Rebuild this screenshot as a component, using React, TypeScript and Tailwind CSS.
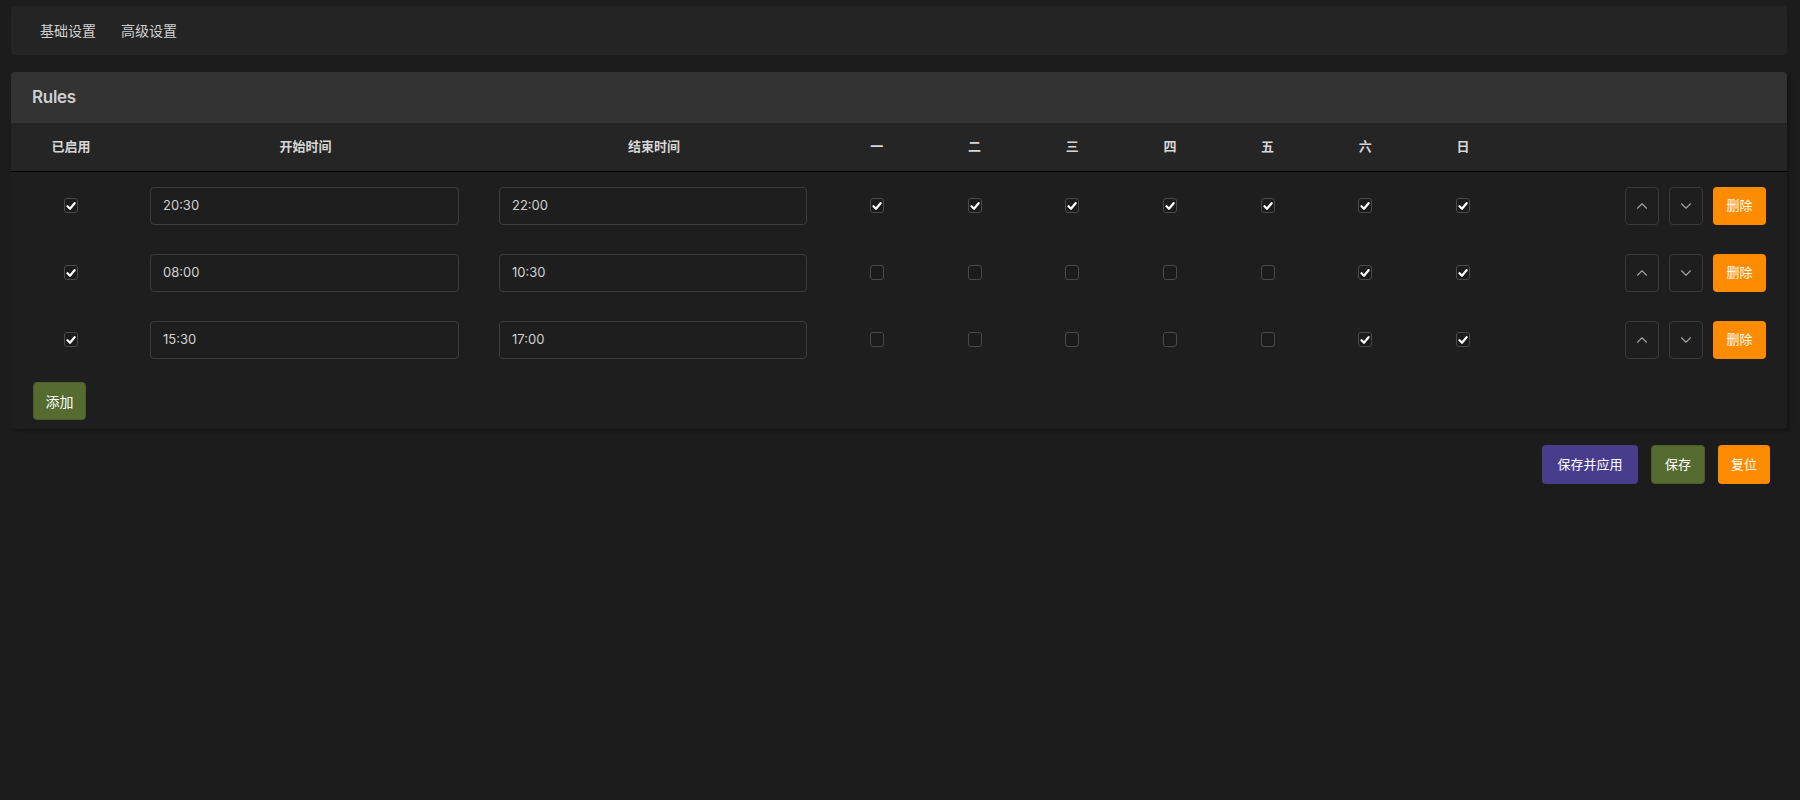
import { ChevronUp, ChevronDown } from 'lucide-react';

interface Rule {
  enabled: boolean;
  start: string;
  end: string;
  days: boolean[];
}

const RULES: Rule[] = [
  { enabled: true, start: '20:30', end: '22:00', days: [true, true, true, true, true, true, true] },
  { enabled: true, start: '08:00', end: '10:30', days: [false, false, false, false, false, true, true] },
  { enabled: true, start: '15:30', end: '17:00', days: [false, false, false, false, false, true, true] },
];

const DAYS = ['一', '二', '三', '四', '五', '六', '日'];

const GRID = 'grid grid-cols-[120px_349px_348px_repeat(7,97.7px)_1fr] items-center';

function Check({ checked }: { checked: boolean }) {
  return (
    <span className="w-[14px] h-[15px] rounded-[3px] border border-[#4a4a4a] bg-[#1b1b1b] flex items-center justify-center">
      {checked && (
        <svg width="10" height="10" viewBox="0 0 10 10">
          <path d="M1.5 5.2 L4 7.8 L8.6 2.2" fill="none" stroke="#fff" strokeWidth="2.2" strokeLinecap="round" strokeLinejoin="round" />
        </svg>
      )}
    </span>
  );
}

function TimeInput({ value }: { value: string }) {
  return (
    <div className="h-[38px] rounded-[4px] border border-[#3d3d3d] bg-[#1e1e1e] flex items-center pl-[12px] text-[13px] text-[#d0d0d0]">
      {value}
    </div>
  );
}

export default function App() {
  return (
    <div
      className="min-h-[800px] bg-[#1c1c1c] pl-[11px] pr-[13px] pt-[6px] text-[#d4d4d4]"
      style={{ fontFamily: 'Inter, "Noto Sans CJK SC", sans-serif' }}
    >
      <div className="h-[49px] bg-[#242424] rounded-[4px] flex items-center gap-[25px] pl-[29px] text-[14px] text-[#d0d0d0]">
        <span>基础设置</span>
        <span>高级设置</span>
      </div>

      <div className="mt-[17px] rounded-[4px] bg-[#1e1e1e] shadow-[2px_2px_4px_rgba(0,0,0,0.35)]">
        <div className="h-[51px] bg-[#333333] rounded-t-[4px] flex items-center pl-[21px] text-[17px] font-semibold tracking-[-0.3px] text-[#cfcfcf]">
          Rules
        </div>

        <div className={`${GRID} h-[49px] bg-[#252525] border-b border-black text-[13px] font-bold text-[#d6d6d6]`}>
          <div className="text-center">已启用</div>
          <div className="text-center">开始时间</div>
          <div className="text-center">结束时间</div>
          {DAYS.map((d) => (
            <div key={d} className="text-center">{d}</div>
          ))}
          <div />
        </div>

        {RULES.map((r, i) => (
          <div key={i} className={`${GRID} h-[67px]`}>
            <div className="flex justify-center">
              <Check checked={r.enabled} />
            </div>
            <div className="pl-[19px] pr-[21px]">
              <TimeInput value={r.start} />
            </div>
            <div className="pl-[19px] pr-[21px]">
              <TimeInput value={r.end} />
            </div>
            {r.days.map((d, j) => (
              <div key={j} className="flex justify-center">
                <Check checked={d} />
              </div>
            ))}
            <div className="flex justify-end gap-[10px] pr-[21px]">
              <button className="w-[34px] h-[38px] rounded-[4px] border border-[#3a3a3a] flex items-center justify-center text-[#a0a0a0]">
                <ChevronUp size={18} strokeWidth={1.5} />
              </button>
              <button className="w-[34px] h-[38px] rounded-[4px] border border-[#3a3a3a] flex items-center justify-center text-[#a0a0a0]">
                <ChevronDown size={18} strokeWidth={1.5} />
              </button>
              <button className="w-[53px] h-[38px] rounded-[4px] bg-[#ff8c00] text-white text-[13px]">删除</button>
            </div>
          </div>
        ))}

        <div className="pl-[22px] pt-[9px] pb-[9px]">
          <button className="w-[53px] h-[38px] rounded-[4px] bg-[#556b2f] border border-[#4b5e2a] text-white text-[14px]">添加</button>
        </div>
      </div>

      <div className="mt-[16px] flex justify-end gap-[13px] pr-[17px]">
        <button className="w-[96px] h-[39px] rounded-[4px] bg-[#483d8b] text-white text-[13px]">保存并应用</button>
        <button className="w-[54px] h-[39px] rounded-[4px] bg-[#556b2f] border border-[#4b5e2a] text-white text-[13px]">保存</button>
        <button className="w-[52px] h-[39px] rounded-[4px] bg-[#ff8c00] text-white text-[13px]">复位</button>
      </div>
    </div>
  );
}
